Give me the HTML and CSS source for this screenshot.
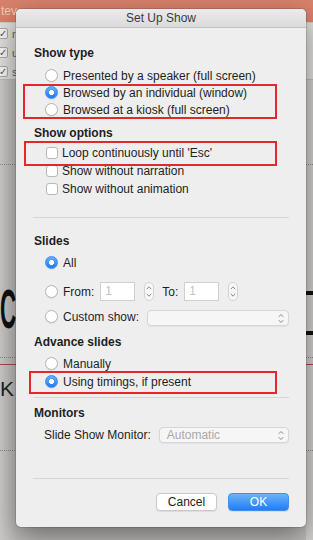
FILE: index.html
```html
<!DOCTYPE html>
<html lang="en">
<head>
    <meta charset="UTF-8">
    <meta name="viewport" content="width=device-width, initial-scale=1.0">
    <title>Set Up Show</title>
    <link rel="stylesheet" href="styles.css">
</head>
<body>
    <div class="app">
        <div class="app-bar"><span class="app-tab">tev</span></div>
        <div class="ribbon">
            <div class="rib-item"><span class="rib-box">&#10003;</span><span class="rib-text">r</span></div>
            <div class="rib-item"><span class="rib-box">&#10003;</span><span class="rib-text">u</span></div>
            <div class="rib-item"><span class="rib-box">&#10003;</span><span class="rib-text">s</span></div>
        </div>
        <div class="workspace">
            <div class="dots dots-top"></div>
            <div class="slide-title">
                <span class="big-c">C</span>
                <span class="e-arms"><i></i><i></i></span>
            </div>
            <div class="dots dots-mid"></div>
            <div class="red-rule"></div>
            <div class="slide-sub">K</div>
            <div class="dots dots-low"></div>
        </div>
    </div>

    <div class="dialog">
        <div class="dlg-title">Set Up Show</div>
        <div class="dlg-body">
            <h2>Show type</h2>
            <div class="opt"><span class="radio"></span>Presented by a speaker (full screen)</div>
            <div class="mark mark-type">
                <div class="opt"><span class="radio on"></span>Browsed by an individual (window)</div>
                <div class="opt"><span class="radio"></span>Browsed at a kiosk (full screen)</div>
            </div>

            <h2 class="h-options">Show options</h2>
            <div class="mark mark-loop">
                <div class="chk"><span class="box"></span>Loop continuously until 'Esc'</div>
            </div>
            <div class="chk"><span class="box"></span>Show without narration</div>
            <div class="chk"><span class="box"></span>Show without animation</div>

            <div class="sep sep-1"></div>

            <h2 class="h-slides">Slides</h2>
            <div class="opt"><span class="radio on"></span>All</div>
            <div class="opt range range-from">
                <span class="radio"></span>From:
                <span class="field field-from">1</span>
                <span class="stepper"><svg width="6" height="13" viewBox="0 0 6 13"><path d="M0.8 4.2 L3 1.8 L5.2 4.2 M0.8 8.8 L3 11.2 L5.2 8.8" fill="none" stroke="#8a8a8a" stroke-width="1"/></svg></span>
                <span class="to">To:</span>
                <span class="field field-to">1</span>
                <span class="stepper"><svg width="6" height="13" viewBox="0 0 6 13"><path d="M0.8 4.2 L3 1.8 L5.2 4.2 M0.8 8.8 L3 11.2 L5.2 8.8" fill="none" stroke="#8a8a8a" stroke-width="1"/></svg></span>
            </div>
            <div class="opt range">
                <span class="radio"></span>Custom show:
                <span class="select select-custom"><span></span><svg width="6" height="11" viewBox="0 0 6 11"><path d="M0.8 3.8 L3 1.5 L5.2 3.8 M0.8 7.2 L3 9.5 L5.2 7.2" fill="none" stroke="#8a8a8a" stroke-width="1"/></svg></span>
            </div>

            <h2 class="h-advance">Advance slides</h2>
            <div class="opt"><span class="radio"></span>Manually</div>
            <div class="mark mark-timing">
                <div class="opt"><span class="radio on"></span>Using timings, if present</div>
            </div>

            <div class="sep sep-2"></div>

            <h2 class="h-monitors">Monitors</h2>
            <div class="monitor-row">
                <span class="monitor-label">Slide Show Monitor:</span>
                <span class="select select-monitor"><span>Automatic</span><svg width="6" height="11" viewBox="0 0 6 11"><path d="M0.8 3.8 L3 1.5 L5.2 3.8 M0.8 7.2 L3 9.5 L5.2 7.2" fill="none" stroke="#8a8a8a" stroke-width="1"/></svg></span>
            </div>

            <div class="sep sep-3"></div>

            <div class="buttons">
                <button class="btn">Cancel</button>
                <button class="btn btn-ok">OK</button>
            </div>
        </div>
    </div>
</body>
</html>
```

FILE: styles.css
```css
* {
    box-sizing: border-box;
}
body {
    margin: 0;
    width: 313px;
    height: 540px;
    overflow: hidden;
    font-family: "Liberation Sans", Arial, sans-serif;
    font-size: 12px;
    color: #1e1e1e;
    background: #cbc9c7;
}

/* the PowerPoint window behind the dialog */
.app {
    height: 540px;
    display: flex;
    flex-direction: column;
}
.app-bar {
    height: 22px;
    background: #d8826b;
    color: #f3c9bb;
    font-size: 12px;
    line-height: 22px;
    padding-left: 1px;
}
.ribbon {
    height: 58px;
    background: #e2e1e0;
    border-top: 1px solid #cfcdcc;
    border-bottom: 1px solid #bfbdbb;
    padding-top: 5px;
    display: flex;
    flex-direction: column;
    gap: 8px;
}
.rib-item {
    display: flex;
    align-items: center;
    gap: 4px;
    height: 11px;
    margin-left: -3px;
    color: #666;
}
.rib-box {
    width: 11px;
    height: 11px;
    border: 1px solid #aaa;
    border-radius: 2px;
    background: #f6f6f6;
    font-size: 10px;
    line-height: 9px;
    text-align: center;
    color: #555;
}
.rib-text {
    font-size: 11px;
}
.workspace {
    flex: 1;
    background: linear-gradient(90deg, #cdcbc9, #c2c0be 16px, #c2c0be 306px, #d3d1cf 306px);
    display: flex;
    flex-direction: column;
}
.dots {
    height: 1px;
    border-top: 1px dotted #8d8b89;
}
.dots-top {
    margin-top: 84px;
}
.slide-title {
    margin-top: 118px;
    height: 52px;
    display: flex;
    justify-content: space-between;
    align-items: flex-start;
}
.big-c {
    display: block;
    font-size: 56px;
    font-weight: bold;
    line-height: 52px;
    color: #111;
    transform: scaleX(0.4);
    transform-origin: left center;
}
.e-arms {
    width: 8px;
    height: 44px;
    margin-top: 8px;
    display: flex;
    flex-direction: column;
    justify-content: space-between;
}
.e-arms i {
    height: 4px;
    background: #111;
}
.dots-mid {
    margin-top: 22px;
}
.red-rule {
    margin-top: 6px;
    height: 1px;
    background: #b0464b;
}
.slide-sub {
    margin-top: 13px;
    font-size: 21px;
    line-height: 22px;
    color: #222;
}
.dots-low {
    margin-top: 50px;
}

/* dialog */
.dialog {
    position: absolute;
    left: 16px;
    top: 9px;
    width: 290px;
    height: 518px;
    background: #eeeeee;
    border-radius: 5px;
    box-shadow: 0 0 0 1px rgba(0, 0, 0, 0.12), 0 10px 28px rgba(0, 0, 0, 0.45);
    overflow: hidden;
}
.dlg-title {
    height: 19px;
    line-height: 18px;
    text-align: center;
    color: #3a3a3a;
    background: linear-gradient(#ecebec, #dcdadc);
    border-bottom: 1px solid #c2c0c2;
}
.dlg-body {
    padding: 0 17px 0 18px;
}
h2 {
    margin: 17px 0 6px;
    font-size: 12px;
    line-height: 16px;
    font-weight: bold;
}
.h-options {
    margin: 7px 0 3px;
}
.h-slides {
    margin: 15px 0 5px;
}
.h-advance {
    margin: 5px 0 5px;
}
.h-monitors {
    margin: 7px 0 5px;
}

.opt {
    height: 17px;
    display: flex;
    align-items: center;
    padding-left: 11px;
}
.radio {
    width: 13px;
    height: 13px;
    flex: none;
    margin-right: 5px;
    border-radius: 50%;
    background: #fff;
    border: 1px solid #b4b4b4;
    box-shadow: 0 1px 1px rgba(0, 0, 0, 0.06);
}
.radio.on {
    border-color: #3c8cf2;
    background: radial-gradient(circle, #fff 0 2.2px, transparent 2.8px), linear-gradient(#66aef9, #1d7df5);
}
.chk {
    height: 18px;
    display: flex;
    align-items: center;
    padding-left: 12px;
}
.box {
    width: 12px;
    height: 12px;
    flex: none;
    margin-right: 4px;
    border-radius: 3px;
    background: #fff;
    border: 1px solid #b8b8b8;
}

.sep {
    height: 1px;
    background: #d5d5d5;
    margin-left: -1px;
}
.sep-1 {
    margin-top: 19px;
}
.sep-2 {
    margin-top: 7px;
}
.sep-3 {
    margin-top: 34px;
}

/* red annotation boxes drawn over the rows */
.mark {
    position: relative;
}
.mark::after {
    content: "";
    position: absolute;
    border: 2px solid #e4262f;
}
.mark-type::after {
    left: -11px;
    right: 12px;
    top: 0;
    bottom: -1px;
}
.mark-loop::after {
    left: -10px;
    right: 12px;
    top: -3px;
    bottom: -4px;
}
.mark-timing {
    margin-top: 1px;
}
.mark-timing::after {
    left: -5px;
    right: 12px;
    top: -2px;
    bottom: -4px;
}

.range {
    height: 25px;
}
.range-from {
    margin-top: 8px;
}
.field {
    width: 35px;
    height: 19px;
    margin-left: 6px;
    background: #fff;
    border: 1px solid #d0d0d0;
    color: #c4c4c4;
    line-height: 17px;
    padding-left: 4px;
}
.stepper {
    width: 10px;
    height: 19px;
    margin-left: 9px;
    border-radius: 5px;
    background: #f7f7f7;
    border: 1px solid #d2d2d2;
    display: flex;
    align-items: center;
    justify-content: center;
}
.to {
    margin-left: 8px;
}
.field-to {
    margin-left: 6px;
}
.select {
    flex: 1;
    height: 16px;
    margin-left: 8px;
    border-radius: 4px;
    background: #f6f6f6;
    border: 1px solid #d6d6d6;
    box-shadow: 0 1px 1px rgba(0, 0, 0, 0.05);
    display: flex;
    align-items: center;
    justify-content: space-between;
    padding: 0 4px 0 7px;
    color: #a9a9a9;
}
.select-custom {
    margin-top: 3px;
}
.monitor-row {
    height: 18px;
    display: flex;
    align-items: center;
    padding-left: 10px;
}
.monitor-label {
    flex: none;
}

.buttons {
    margin-top: 14px;
    display: flex;
    justify-content: flex-end;
    gap: 11px;
}
.btn {
    width: 61px;
    height: 18px;
    padding: 0;
    font-family: inherit;
    font-size: 12px;
    color: #222;
    background: #fff;
    border: 1px solid #c9c9c9;
    border-radius: 4px;
    box-shadow: 0 1px 1px rgba(0, 0, 0, 0.08);
}
.btn-ok {
    color: #fff;
    border-color: #3f8ef0;
    background: linear-gradient(#6db2fa, #1f7ef5);
}
```
